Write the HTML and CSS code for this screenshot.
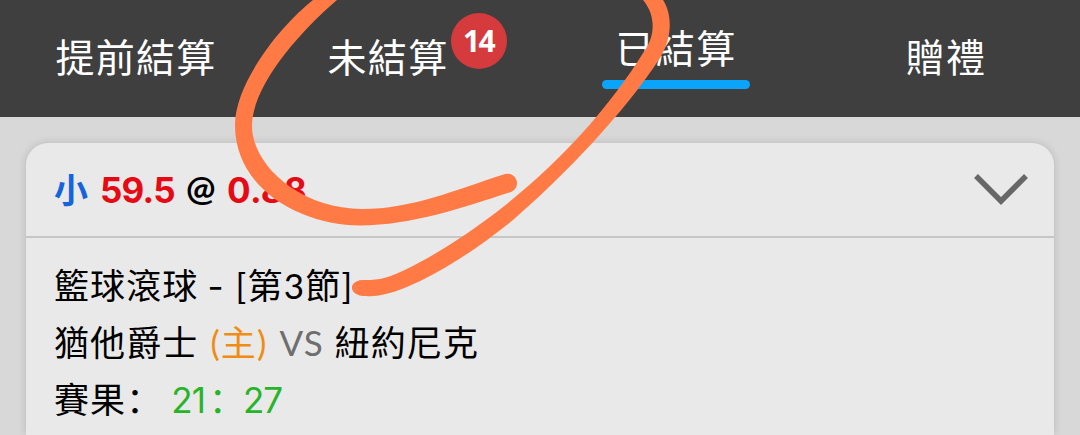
FILE: index.html
```
<!DOCTYPE html>
<html lang="zh-Hant">
<head>
  <meta charset="UTF-8" />
  <meta name="viewport" content="width=device-width, initial-scale=1.0"/>
  <title>已結算</title>
  <link rel="stylesheet" href="styles.css">
</head>
<body>

  <nav class="tabs">
    <a class="tab">提前結算</a>
    <a class="tab pending">未結算<span class="badge">14</span></a>
    <a class="tab active">已結算</a>
    <a class="tab">贈禮</a>
  </nav>

  <main class="card">
    <div class="card-header">
      <div class="bet">
        <span class="side">小</span>
        <span class="num line">59.5</span>
        <span class="at">@</span>
        <span class="num odds">0.88</span>
      </div>
      <svg class="chevron" width="54" height="32" viewBox="0 0 54 32">
        <path d="M2 2 L27 27 L52 2" fill="none" stroke="#676767" stroke-width="5.5"/>
      </svg>
    </div>
    <div class="card-body">
      <p class="row"><span>籃球滾球</span><span class="dash">-</span><span class="period">[第3節]</span></p>
      <p class="row"><span>猶他爵士</span><span class="home">(主)</span><span class="vs">VS</span><span>紐約尼克</span></p>
      <p class="row"><span>賽果<span class="colon" lang="zh-Hans">：</span></span><span class="score">21<span class="colon" lang="zh-Hans">：</span>27</span></p>
    </div>
  </main>

  <svg class="marker" width="1080" height="435" viewBox="0 0 1080 435">
    <path d="M313 0 C280 26 235 83 235 125 C235 190 302 225 360 225.5 C412 225.5 465 207 511 192 A9.5 9.5 0 0 0 505 174 C455 190 412 209 362 209 C300 209 252 165 252 126 C252 88 295 36 337 0 Z"/>
    <path d="M643 0 C655 14 656 34 645 50 C610 107 560 162 503 207 C460 241 405 274 380 279 C374 280 368 280 362 280 C348 281 348 296 366 296 C395 299 455 267 513 220 C565 175 625 112 660 58 C673 36 672 14 663 0 Z"/>
  </svg>

</body>
</html>
```
FILE: styles.css
```
body {
  margin: 0;
  height: 435px;
  overflow: hidden;
  background-color: #d8d8d8;
  color: #000;
  font-family: Lato, "Noto Sans CJK TC", sans-serif;
}

.tabs {
  display: grid;
  grid-template-columns: 270px 270px 270px 270px;
  height: 117px;
  background-color: #3f3f3f;
}

.tab {
  position: relative;
  justify-self: center;
  height: 60px;
  margin: 27px 0 0 2px;
  color: #fff;
  font-size: 39px;
  line-height: 60px;
  letter-spacing: 1.3px;
  white-space: nowrap;
}

.tab.pending {
  margin-right: 36px;
}

.tab.active {
  width: 148px;
  margin-top: 18px;
  text-align: center;
}

.tab.active::after {
  content: "";
  display: block;
  height: 9px;
  margin-top: 2px;
  border-radius: 5px;
  background-color: #0aa5fb;
}

.badge {
  position: absolute;
  left: 123px;
  top: -14px;
  width: 56px;
  height: 56px;
  border-radius: 50%;
  background-color: #d53a3c;
  font-family: "Noto Sans", sans-serif;
  font-size: 30px;
  font-weight: bold;
  line-height: 55px;
  letter-spacing: -1.5px;
  text-align: center;
}

.card {
  height: 292px;
  margin: 26px 26px 0;
  border-radius: 22px 22px 0 0;
  background-color: #e9e9e9;
  box-shadow: 0 0 8px rgba(0, 0, 0, 0.15);
}

.card-header {
  display: flex;
  justify-content: space-between;
  align-items: center;
  height: 93px;
  padding: 0 26px 0 28px;
  border-bottom: 2px solid #c6c6c6;
}

.bet {
  display: flex;
  align-items: baseline;
  margin-top: -2px;
  font-size: 34px;
  font-weight: bold;
}

.side {
  width: 46px;
  color: #1464dc;
}

.num {
  color: #e60a14;
  font-family: Inter, sans-serif;
  font-size: 35px;
  font-weight: 700;
  letter-spacing: -0.8px;
}

.line {
  width: 86px;
}

.odds {
  letter-spacing: 0.3px;
}

.at {
  position: relative;
  top: -2px;
  width: 41px;
  font-size: 35px;
}

.card-body {
  padding: 19px 28px 0;
}

.row {
  display: flex;
  align-items: baseline;
  height: 57px;
  margin: 0;
  font-size: 35px;
  line-height: 57px;
  letter-spacing: 1.1px;
  white-space: nowrap;
}

.dash {
  width: 16px;
  margin: 0 12px 0 9px;
  font-family: Inter, sans-serif;
  text-align: center;
}

.period {
  letter-spacing: 1.3px;
}

.home {
  margin: 0 12px;
  color: #f08c14;
}

.vs {
  margin-right: 11px;
  color: #6e6e6e;
}

.score {
  margin-left: 9px;
  color: #28b428;
  font-family: Inter, sans-serif;
  letter-spacing: -1px;
}

.colon {
  font-family: "Noto Sans CJK SC", sans-serif;
  line-height: 1;
}

.score .colon {
  margin-left: 4px;
}

.marker {
  position: absolute;
  left: 0;
  top: 0;
  fill: #ff7a45;
}
```
